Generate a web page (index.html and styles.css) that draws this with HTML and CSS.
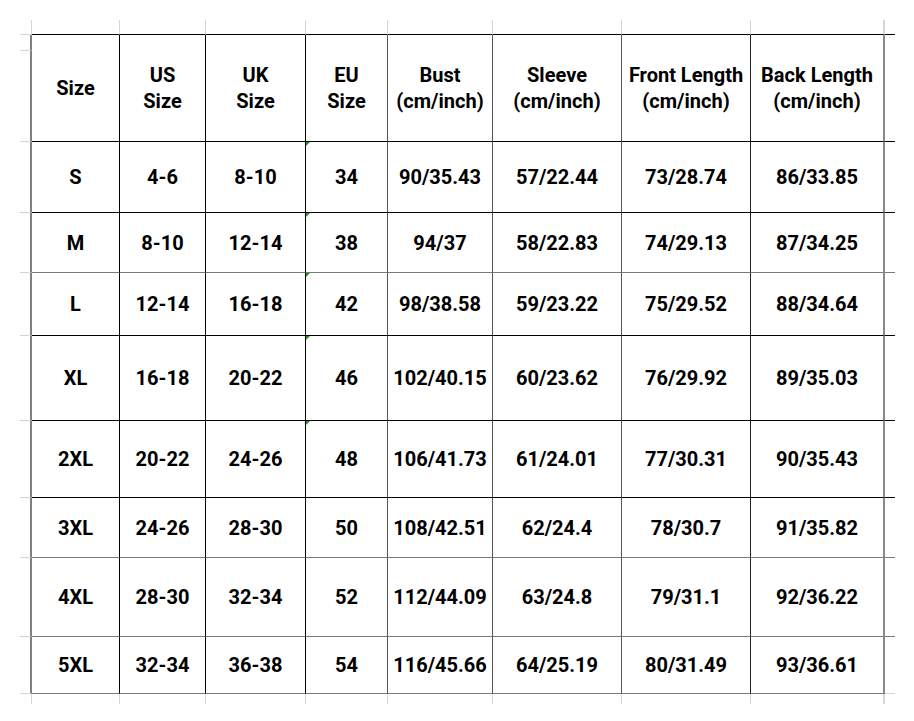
FILE: index.html
```html
<!DOCTYPE html>
<html>
<head>
<meta charset="utf-8">
<link rel="stylesheet" href="styles.css">
</head>
<body>
<div class="page">
  <div class="sheet">
    <!-- top stub row -->
    <div class="corner-tl"></div>
    <div class="st"></div><div class="st"></div><div class="st"></div><div class="st"></div>
    <div class="st"></div><div class="st"></div><div class="st"></div><div class="st st8"></div>
    <div class="corner-tr"></div>

    <!-- header -->
    <div class="sl"></div>
    <div class="cell hd c1 rb">Size</div>
    <div class="cell hd c2 rb">US<br>Size</div>
    <div class="cell hd c3 rb">UK<br>Size</div>
    <div class="cell hd c4 rb">EU<br>Size</div>
    <div class="cell hd c5 rb">Bust<br>(cm/inch)</div>
    <div class="cell hd c6 rb">Sleeve<br>(cm/inch)</div>
    <div class="cell hd c7 rb">Front Length<br>(cm/inch)</div>
    <div class="cell hd c8 rb">Back Length<br>(cm/inch)</div>
    <div class="sr hdr rb"></div>
    <div class="sl"></div>

    <!-- S -->
    <div class="sl"></div>
    <div class="cell c1 rb">S</div><div class="cell c2 rb">4-6</div><div class="cell c3 rb">8-10</div>
    <div class="cell c4 rb mark">34</div><div class="cell c5 rb">90/35.43</div><div class="cell c6 rb">57/22.44</div>
    <div class="cell c7 rb">73/28.74</div><div class="cell c8 rb">86/33.85</div><div class="sr rb"></div>
    <!-- M -->
    <div class="sl"></div>
    <div class="cell c1 rg">M</div><div class="cell c2 rg">8-10</div><div class="cell c3 rg">12-14</div>
    <div class="cell c4 rg mark">38</div><div class="cell c5 rg">94/37</div><div class="cell c6 rg">58/22.83</div>
    <div class="cell c7 rg">74/29.13</div><div class="cell c8 rg">87/34.25</div><div class="sr rg"></div>
    <!-- L -->
    <div class="sl"></div>
    <div class="cell c1 rb">L</div><div class="cell c2 rb">12-14</div><div class="cell c3 rb">16-18</div>
    <div class="cell c4 rb mark">42</div><div class="cell c5 rb">98/38.58</div><div class="cell c6 rb">59/23.22</div>
    <div class="cell c7 rb">75/29.52</div><div class="cell c8 rb">88/34.64</div><div class="sr rb"></div>
    <!-- XL -->
    <div class="sl"></div>
    <div class="cell c1 rb">XL</div><div class="cell c2 rb">16-18</div><div class="cell c3 rb">20-22</div>
    <div class="cell c4 rb mark">46</div><div class="cell c5 rb">102/40.15</div><div class="cell c6 rb">60/23.62</div>
    <div class="cell c7 rb">76/29.92</div><div class="cell c8 rb">89/35.03</div><div class="sr rb"></div>
    <!-- 2XL -->
    <div class="sl"></div>
    <div class="cell c1 rb">2XL</div><div class="cell c2 rb">20-22</div><div class="cell c3 rb">24-26</div>
    <div class="cell c4 rb mark">48</div><div class="cell c5 rb">106/41.73</div><div class="cell c6 rb">61/24.01</div>
    <div class="cell c7 rb">77/30.31</div><div class="cell c8 rb">90/35.43</div><div class="sr rb"></div>
    <!-- 3XL -->
    <div class="sl"></div>
    <div class="cell c1 rg">3XL</div><div class="cell c2 rg">24-26</div><div class="cell c3 rg">28-30</div>
    <div class="cell c4 rg">50</div><div class="cell c5 rg">108/42.51</div><div class="cell c6 rg">62/24.4</div>
    <div class="cell c7 rg">78/30.7</div><div class="cell c8 rg">91/35.82</div><div class="sr rg"></div>
    <!-- 4XL -->
    <div class="sl"></div>
    <div class="cell c1 rg">4XL</div><div class="cell c2 rg">28-30</div><div class="cell c3 rg">32-34</div>
    <div class="cell c4 rg">52</div><div class="cell c5 rg">112/44.09</div><div class="cell c6 rg">63/24.8</div>
    <div class="cell c7 rg">79/31.1</div><div class="cell c8 rg">92/36.22</div><div class="sr rg"></div>
    <!-- 5XL -->
    <div class="sl"></div>
    <div class="cell c1 rg">5XL</div><div class="cell c2 rg">32-34</div><div class="cell c3 rg">36-38</div>
    <div class="cell c4 rg">54</div><div class="cell c5 rg">116/45.66</div><div class="cell c6 rg">64/25.19</div>
    <div class="cell c7 rg">80/31.49</div><div class="cell c8 rg">93/36.61</div><div class="sr rl"></div>

    <!-- bottom stub row -->
    <div class="corner-bl"></div>
    <div class="sb"></div><div class="sb"></div><div class="sb"></div><div class="sb"></div>
    <div class="sb"></div><div class="sb"></div><div class="sb"></div><div class="sb sb8"></div>
    <div class="corner-br"></div>
  </div>
</div>
</body>
</html>
```

FILE: styles.css
```css
html, body {
  margin: 0;
  padding: 0;
  background: #ffffff;
}

.page {
  padding: 20px 0 0 20px;
}

.sheet {
  display: grid;
  grid-template-columns: 12px 88px 86px 100px 82px 105px 129px 129px 134px 10px;
  grid-template-rows: 15px 16px 91px 71px 60px 63px 85px 77px 60px 79px 57px 10px;
  font-family: Roboto, "Liberation Sans", Arial, sans-serif;
  font-weight: 700;
  font-size: 20px;
  color: #000;
}

.sheet > div {
  box-sizing: border-box;
}

.cell {
  display: flex;
  align-items: center;
  justify-content: center;
  text-align: center;
  line-height: 26px;
  white-space: nowrap;
}

.hd {
  grid-row: span 2;
}

.hdr {
  grid-row: span 2;
}

/* column right borders */
.c1, .c2, .c3 { border-right: 1px solid #000; }
.c4, .c5, .c6 { border-right: 1px solid #555; }
.c7 { border-right: 1px solid #222; }
.c8 { border-right: 2px solid #8a8a8a; }

/* row bottom borders */
.rb { border-bottom: 1px solid #000; }
.rg { border-bottom: 1px solid #7a7a7a; }
.rl { border-bottom: 1px solid #d6d6d6; }

/* stubs (spreadsheet gridlines outside the table) */
.corner-tl {
  border-right: 1px solid #d6d6d6;
  border-bottom: 1px solid #d6d6d6;
}
.st {
  border-right: 1px solid #d6d6d6;
  border-bottom: 1px solid #000;
}
.st8 { border-right-width: 2px; }
.corner-tr { border-bottom: 1px solid #000; }

.sl {
  border-right: 2px solid #808080;
  border-bottom: 1px solid #d6d6d6;
}

.corner-bl { border-right: 1px solid #d6d6d6; }
.sb { border-right: 1px solid #d6d6d6; }
.sb8 { border-right-width: 2px; }

/* excel "number stored as text" marker */
.mark { position: relative; }
.mark::before {
  content: "";
  position: absolute;
  left: 0;
  top: 0;
  width: 0;
  height: 0;
  border-top: 4px solid #2a8c2a;
  border-right: 4px solid transparent;
}
```
